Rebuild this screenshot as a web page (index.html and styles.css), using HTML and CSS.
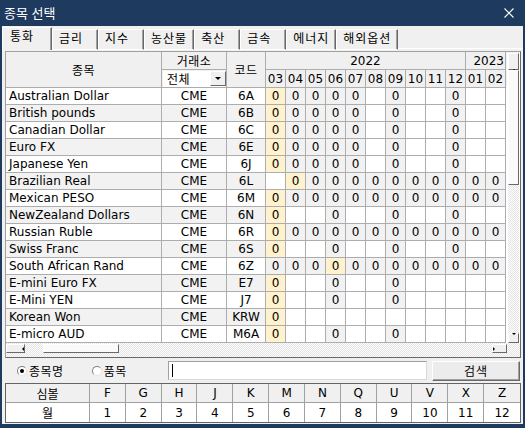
FILE: index.html
```html
<!DOCTYPE html>
<html lang="ko">
<head>
  <meta charset="UTF-8">
  <title>종목 선택</title>
  <link rel="stylesheet" href="styles.css">
</head>
<body>
  <div class="window">
    <div class="titlebar">
      <span class="title">종목 선택</span>
      <svg class="close" viewBox="0 0 10 10">
        <path d="M0.5 0.5 L9.5 9.5 M9.5 0.5 L0.5 9.5" stroke="#fff" stroke-width="1.1" fill="none"/>
      </svg>
    </div>

    <div class="client">
      <div class="tabs">
        <div class="tab active">통화</div>
        <div class="tab">금리</div>
        <div class="tab">지수</div>
        <div class="tab">농산물</div>
        <div class="tab">축산</div>
        <div class="tab">금속</div>
        <div class="tab">에너지</div>
        <div class="tab">해외옵션</div>
        <div class="tabs-fill"></div>
      </div>

      <div class="panel">
        <div class="grid">
          <div class="grid-main">
            <div class="sheet">
              <div class="head" id="head">
                <div class="hcell h-name">종목</div>
                <div class="hcell h-ex">거래소</div>
                <div class="hcell h-combo">
                  <div class="combo"><span>전체</span><span class="drop"><i class="arrow down"></i></span></div>
                </div>
                <div class="hcell h-code">코드</div>
                <div class="hcell h-y22">2022</div>
                <div class="hcell h-y23">2023</div>
              </div>
              <div id="rows"></div>
            </div>
            <div class="vscroll">
              <div class="sb-btn up"><i class="arrow up"></i></div>
              <div class="sb-thumb"></div>
              <div class="sb-track"></div>
              <div class="sb-btn down"><i class="arrow down"></i></div>
            </div>
          </div>
          <div class="hscroll">
            <div class="sb-btn left"><i class="arrow left"></i></div>
            <div class="sb-thumb"></div>
            <div class="sb-track"></div>
            <div class="sb-btn right"><i class="arrow right"></i></div>
            <div class="corner"></div>
          </div>
        </div>

        <div class="search">
          <label class="radio"><span class="dot checked"></span>종목명</label>
          <label class="radio"><span class="dot"></span>품목</label>
          <div class="text-input"><span class="caret"></span></div>
          <button class="search-btn">검색</button>
        </div>

        <div class="codes">
          <div class="c head-c">심볼</div>
          <div class="c head-c">F</div>
          <div class="c head-c">G</div>
          <div class="c head-c">H</div>
          <div class="c head-c">J</div>
          <div class="c head-c">K</div>
          <div class="c head-c">M</div>
          <div class="c head-c">N</div>
          <div class="c head-c">Q</div>
          <div class="c head-c">U</div>
          <div class="c head-c">V</div>
          <div class="c head-c">X</div>
          <div class="c head-c">Z</div>
          <div class="c">월</div>
          <div class="c">1</div>
          <div class="c">2</div>
          <div class="c">3</div>
          <div class="c">4</div>
          <div class="c">5</div>
          <div class="c">6</div>
          <div class="c">7</div>
          <div class="c">8</div>
          <div class="c">9</div>
          <div class="c">10</div>
          <div class="c">11</div>
          <div class="c">12</div>
        </div>
      </div>
    </div>
  </div>

  <script>
    const months = ['03', '04', '05', '06', '07', '08', '09', '10', '11', '12', '01', '02'];

    // Y = nearest contract, O = listed, . = none
    const items = [
      ['Australian Dollar', '6A', 'YOOOO.O..O..'],
      ['British pounds', '6B', 'YOOOO.O..O..'],
      ['Canadian Dollar', '6C', 'YOOOO.O..O..'],
      ['Euro FX', '6E', 'YOOOO.O..O..'],
      ['Japanese Yen', '6J', 'YOOOO.O..O..'],
      ['Brazilian Real', '6L', '.YOOOOOOOOOO'],
      ['Mexican PESO', '6M', 'YOOOOOOOOOOO'],
      ['NewZealand Dollars', '6N', 'Y..O..O..O..'],
      ['Russian Ruble', '6R', 'YOOOOOOOOOOO'],
      ['Swiss Franc', '6S', 'Y..O..O..O..'],
      ['South African Rand', '6Z', 'OOOYOOOOOOOO'],
      ['E-mini Euro FX', 'E7', 'Y..O..O.....'],
      ['E-Mini YEN', 'J7', 'Y..O..O.....'],
      ['Korean Won', 'KRW', 'Y...........'],
      ['E-micro AUD', 'M6A', 'Y..O..O.....']
    ];

    const head = document.getElementById('head');
    months.forEach(m => {
      const cell = document.createElement('div');
      cell.className = 'hcell h-mon';
      cell.textContent = m;
      head.appendChild(cell);
    });

    const rows = document.getElementById('rows');
    items.forEach(([name, code, marks], i) => {
      const row = document.createElement('div');
      row.className = 'row' + (i % 2 ? ' alt' : '');
      let html = `<div class="cell name">${name}</div>` +
                 `<div class="cell ex">CME</div>` +
                 `<div class="cell code">${code}</div>`;
      for (const m of marks) {
        if (m === 'Y') html += '<div class="cell mon near">0</div>';
        else if (m === 'O') html += '<div class="cell mon on">0</div>';
        else html += '<div class="cell mon"></div>';
      }
      row.innerHTML = html;
      rows.appendChild(row);
    });
  </script>
</body>
</html>
```

FILE: styles.css
```css
* {
  box-sizing: border-box;
}

body {
  margin: 0;
  font-family: "DejaVu Sans", "Noto Sans CJK KR", sans-serif;
  font-size: 12px;
  color: #000;
  background: #1e3a5f;
}

.window {
  width: 525px;
  height: 428px;
  display: flex;
  flex-direction: column;
  background: #1e3a5f;
  padding: 0 2px 4px;
}

.titlebar {
  height: 26px;
  flex: none;
  display: flex;
  align-items: center;
  justify-content: space-between;
  padding: 0 9px 1px 2px;
  color: #fff;
}

.title {
  font-family: "Noto Sans CJK KR", sans-serif;
  font-size: 13px;
}

.close {
  width: 10px;
  height: 10px;
}

.client {
  flex: 1;
  display: flex;
  flex-direction: column;
  background: #f0f0f0;
}

/* tabs */
.tabs {
  height: 24px;
  padding-top: 1px;
  display: flex;
  align-items: flex-end;
}

.tab {
  height: 21px;
  min-width: 46px;
  padding: 0 6px;
  border-top: 1px solid #fff;
  border-left: 1px solid #fff;
  border-right: 1px solid #696969;
  border-bottom: 1px solid #fff;
  box-shadow: inset -1px 0 #a0a0a0;
  line-height: 18px;
  letter-spacing: 1px;
  white-space: nowrap;
}

.tab.active {
  height: 23px;
  min-width: 50px;
  padding-left: 7px;
  border-bottom: none;
  line-height: 18px;
}

.tabs-fill {
  flex: 1;
  height: 1px;
  margin-bottom: 1px;
  background: #fff;
}

.panel {
  flex: 1;
  padding: 1px 2px 0 3px;
  display: flex;
  flex-direction: column;
}

/* item grid */
.grid {
  height: 307px;
  flex: none;
  border: 1px solid;
  border-color: #a0a0a0 #696969 #696969 #a0a0a0;
  background: #fff;
  display: flex;
  flex-direction: column;
}

.grid-main {
  height: 291px;
  display: flex;
}

.sheet {
  width: 501px;
  overflow: hidden;
}

.head,
.row {
  display: grid;
  grid-template-columns: 156px 65px 39px repeat(12, 20px);
}

.head {
  grid-template-rows: 18px 18px;
  background: #f0f0f0;
}

.row {
  height: 17px;
}

.hcell,
.cell {
  border-right: 1px solid #adadad;
  border-bottom: 1px solid #adadad;
  white-space: nowrap;
}

.hcell {
  display: flex;
  align-items: center;
  justify-content: center;
  letter-spacing: 0.5px;
}

.h-name { grid-row: 1 / 3; grid-column: 1; }
.h-ex { grid-row: 1; grid-column: 2; }
.h-combo { grid-row: 2; grid-column: 2; padding: 0 0 0 1px; }
.h-code { grid-row: 1 / 3; grid-column: 3; }
.h-y22 { grid-row: 1; grid-column: 4 / 14; letter-spacing: 0; }
.h-y23 { grid-row: 1; grid-column: 14 / 16; justify-content: flex-end; padding-right: 1px; letter-spacing: 0; }
.h-mon { grid-row: 2; letter-spacing: 0; }

.combo {
  width: 100%;
  height: 16px;
  background: #fff;
  display: flex;
  align-items: center;
  padding-left: 4px;
}

.combo .drop {
  margin-left: auto;
  width: 16px;
  height: 15px;
  background: #f0f0f0;
  border: 1px solid;
  border-color: #fff #696969 #696969 #fff;
  display: flex;
  align-items: center;
  justify-content: center;
}

.cell {
  line-height: 16px;
}

.name {
  padding-left: 3px;
}

.ex,
.code,
.mon {
  text-align: center;
}

.row.alt .name,
.row.alt .ex,
.row.alt .code {
  background: #f2f2f2;
}

.mon.on {
  background: #f2f2f2;
}

.mon.near {
  background: #fff2cc;
}

/* scrollbars */
.vscroll,
.hscroll {
  background: repeating-conic-gradient(#fff 0 25%, #e3e3e3 0 50%) 0 0 / 2px 2px;
}

.vscroll {
  width: 11px;
  margin-left: 1px;
  display: flex;
  flex-direction: column;
}

.sb-btn,
.sb-thumb {
  background: #f0f0f0;
  border: 1px solid;
  border-color: #fff #696969 #696969 #fff;
  display: flex;
  align-items: center;
  justify-content: center;
}

.sb-thumb {
  background: #fafafa;
}

.sb-track {
  flex: 1;
}

.vscroll .up {
  height: 17px;
  margin-top: 1px;
}

.vscroll .sb-thumb {
  height: 115px;
}

.vscroll .down {
  height: 10px;
}

.hscroll {
  height: 14px;
  display: flex;
  align-items: flex-start;
  padding-top: 1px;
}

.hscroll .sb-btn,
.hscroll .sb-thumb {
  height: 9px;
}

.hscroll .left {
  width: 19px;
}

.hscroll .sb-thumb {
  width: 76px;
  margin-left: 18px;
}

.hscroll .right {
  width: 15px;
}

.corner {
  width: 13px;
}

.arrow {
  width: 0;
  height: 0;
  border: 2px solid transparent;
}

.arrow.up { border-bottom-color: #000; border-top-width: 0; }
.arrow.down { border-top-color: #000; border-bottom-width: 0; }
.arrow.left { border-right-color: #000; border-left-width: 0; }
.arrow.right { border-left-color: #000; border-right-width: 0; }

.combo .arrow {
  border-width: 3px 3px 0;
  border-top-color: #000;
}

/* search row */
.search {
  height: 25px;
  flex: none;
  display: flex;
  align-items: center;
  padding-left: 12px;
}

.radio {
  display: flex;
  align-items: center;
  gap: 2px;
  letter-spacing: 0.5px;
}

.radio + .radio {
  margin-left: 28px;
}

.dot {
  width: 10px;
  height: 10px;
  border-radius: 50%;
  border: 1px solid;
  border-color: #808080 #e3e3e3 #e3e3e3 #808080;
  background: #fff;
  display: flex;
  align-items: center;
  justify-content: center;
}

.dot.checked::after {
  content: "";
  width: 4px;
  height: 4px;
  border-radius: 50%;
  background: #000;
}

.text-input {
  margin-left: auto;
  width: 259px;
  height: 19px;
  background: #fff;
  border: 1px solid;
  border-color: #a0a0a0 #d9d9d9 #d9d9d9 #a0a0a0;
  padding: 2px 0 0 3px;
}

.caret {
  display: block;
  width: 1px;
  height: 13px;
  background: #000;
}

.search-btn {
  width: 88px;
  height: 20px;
  margin: 0 1px 0 5px;
  padding: 0;
  font: inherit;
  letter-spacing: 1px;
  background: #ececec;
  border: 1px solid;
  border-color: #fff #696969 #696969 #fff;
  box-shadow: inset -1px -1px #a0a0a0;
}

/* month code table */
.codes {
  height: 40px;
  flex: none;
  display: grid;
  grid-template-columns: 84px repeat(12, 1fr);
  grid-template-rows: 1fr 1fr;
  border: 1px solid #646464;
  background: #fff;
}

.c {
  display: flex;
  align-items: center;
  justify-content: center;
  border-right: 1px solid #a0a0a0;
}

.c:nth-child(13n) {
  border-right: none;
}

.head-c {
  background: #f0f0f0;
  border-bottom: 1px solid #a0a0a0;
}
```
